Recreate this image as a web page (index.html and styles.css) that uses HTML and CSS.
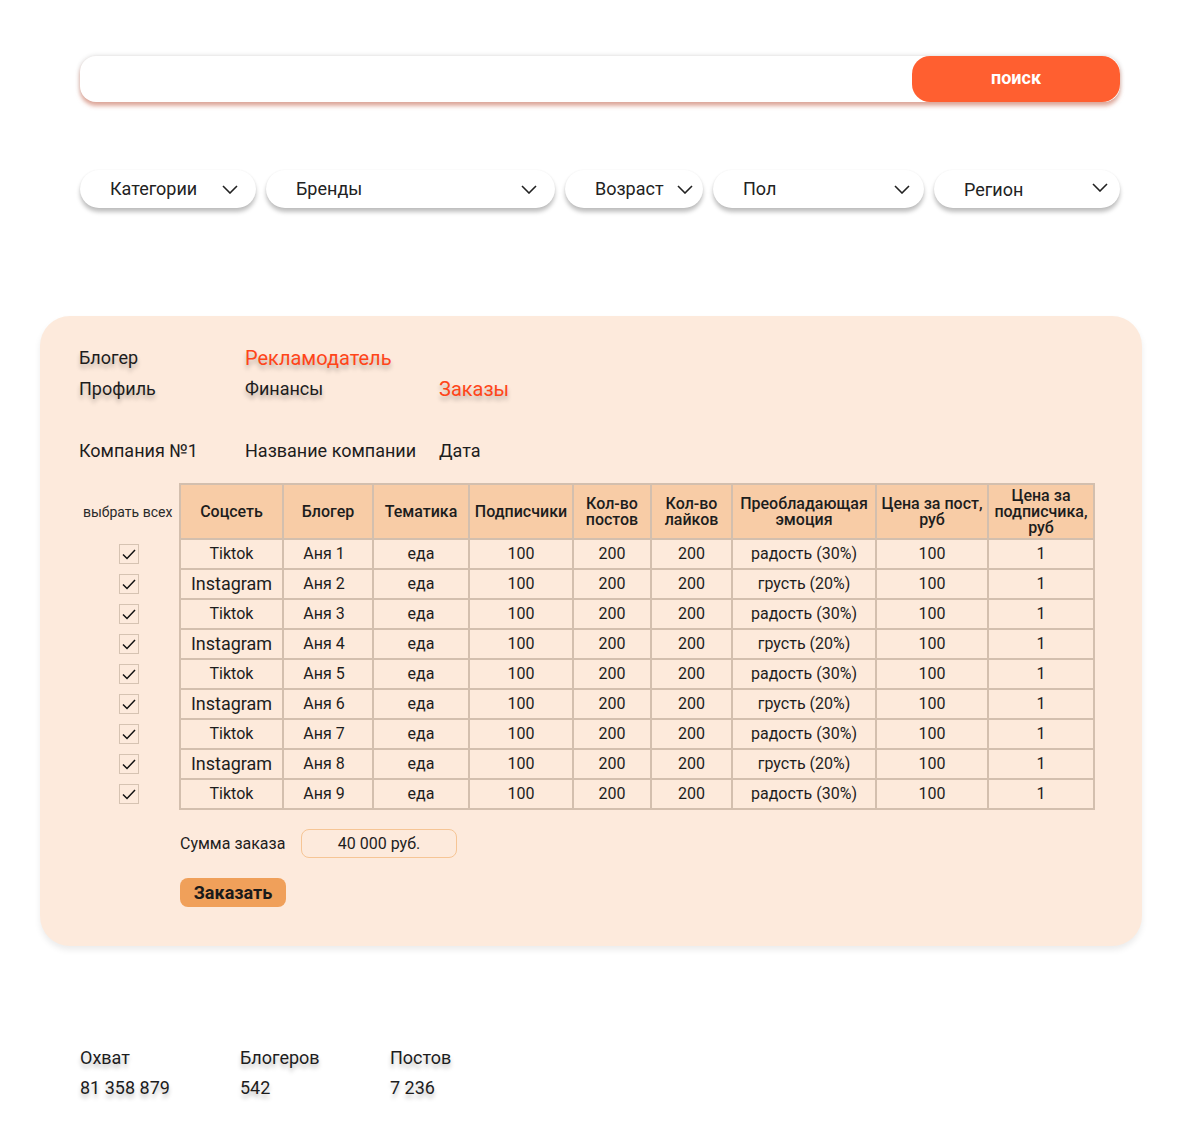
FILE: index.html
```html
<!DOCTYPE html>
<html lang="ru">
<head>
<meta charset="utf-8">
<title>Заказы</title>
<link rel="stylesheet" href="styles.css">
</head>
<body>
<div class="top">
  <div class="search">
    <div class="search-input"></div>
    <button class="search-btn">поиск</button>
  </div>
  <div class="filters">
    <div class="pill w1"><span>Категории</span><svg class="chev" viewBox="0 0 16 9"><path d="M1 1l7 7 7-7"/></svg></div>
    <div class="pill w2"><span>Бренды</span><svg class="chev" viewBox="0 0 16 9"><path d="M1 1l7 7 7-7"/></svg></div>
    <div class="pill w3"><span>Возраст</span><svg class="chev" viewBox="0 0 16 9"><path d="M1 1l7 7 7-7"/></svg></div>
    <div class="pill w4"><span>Пол</span><svg class="chev" viewBox="0 0 16 9"><path d="M1 1l7 7 7-7"/></svg></div>
    <div class="pill w5"><span class="down">Регион</span><svg class="chev up" viewBox="0 0 16 9"><path d="M1 1l7 7 7-7"/></svg></div>
  </div>
</div>

<div class="panel">
  <div class="nav">
    <span class="sh">Блогер</span><span class="sh accent">Рекламодатель</span><span></span>
    <span class="sh">Профиль</span><span class="sh">Финансы</span><span class="sh accent">Заказы</span>
  </div>
  <div class="nav company">
    <span>Компания №1</span><span>Название компании</span><span>Дата</span>
  </div>

  <table class="orders">
    <colgroup>
      <col style="width:101px"><col style="width:103px"><col style="width:90px"><col style="width:96px"><col style="width:104px"><col style="width:78px"><col style="width:81px"><col style="width:144px"><col style="width:112px"><col style="width:106px">
    </colgroup>
    <thead>
      <tr>
        <th class="sel all">выбрать всех</th>
        <th>Соцсеть</th><th>Блогер</th><th>Тематика</th><th>Подписчики</th><th>Кол-во постов</th><th>Кол-во лайков</th><th>Преобладающая эмоция</th><th>Цена за пост, руб</th><th>Цена за подписчика, руб</th>
      </tr>
    </thead>
    <tbody>
      <tr><td class="sel"><span class="cb"><svg viewBox="0 0 14 11"><path d="M1 5.5l4 4L13 1"/></svg></span></td><td>Tiktok</td><td class="name">Аня 1</td><td>еда</td><td>100</td><td>200</td><td>200</td><td>радость (30%)</td><td>100</td><td>1</td></tr>
      <tr><td class="sel"><span class="cb"><svg viewBox="0 0 14 11"><path d="M1 5.5l4 4L13 1"/></svg></span></td><td class="big">Instagram</td><td class="name">Аня 2</td><td>еда</td><td>100</td><td>200</td><td>200</td><td>грусть (20%)</td><td>100</td><td>1</td></tr>
      <tr><td class="sel"><span class="cb"><svg viewBox="0 0 14 11"><path d="M1 5.5l4 4L13 1"/></svg></span></td><td>Tiktok</td><td class="name">Аня 3</td><td>еда</td><td>100</td><td>200</td><td>200</td><td>радость (30%)</td><td>100</td><td>1</td></tr>
      <tr><td class="sel"><span class="cb"><svg viewBox="0 0 14 11"><path d="M1 5.5l4 4L13 1"/></svg></span></td><td class="big">Instagram</td><td class="name">Аня 4</td><td>еда</td><td>100</td><td>200</td><td>200</td><td>грусть (20%)</td><td>100</td><td>1</td></tr>
      <tr><td class="sel"><span class="cb"><svg viewBox="0 0 14 11"><path d="M1 5.5l4 4L13 1"/></svg></span></td><td>Tiktok</td><td class="name">Аня 5</td><td>еда</td><td>100</td><td>200</td><td>200</td><td>радость (30%)</td><td>100</td><td>1</td></tr>
      <tr><td class="sel"><span class="cb"><svg viewBox="0 0 14 11"><path d="M1 5.5l4 4L13 1"/></svg></span></td><td class="big">Instagram</td><td class="name">Аня 6</td><td>еда</td><td>100</td><td>200</td><td>200</td><td>грусть (20%)</td><td>100</td><td>1</td></tr>
      <tr><td class="sel"><span class="cb"><svg viewBox="0 0 14 11"><path d="M1 5.5l4 4L13 1"/></svg></span></td><td>Tiktok</td><td class="name">Аня 7</td><td>еда</td><td>100</td><td>200</td><td>200</td><td>радость (30%)</td><td>100</td><td>1</td></tr>
      <tr><td class="sel"><span class="cb"><svg viewBox="0 0 14 11"><path d="M1 5.5l4 4L13 1"/></svg></span></td><td class="big">Instagram</td><td class="name">Аня 8</td><td>еда</td><td>100</td><td>200</td><td>200</td><td>грусть (20%)</td><td>100</td><td>1</td></tr>
      <tr><td class="sel"><span class="cb"><svg viewBox="0 0 14 11"><path d="M1 5.5l4 4L13 1"/></svg></span></td><td>Tiktok</td><td class="name">Аня 9</td><td>еда</td><td>100</td><td>200</td><td>200</td><td>радость (30%)</td><td>100</td><td>1</td></tr>
    </tbody>
  </table>

  <div class="sum">
    <span class="sum-label">Сумма заказа</span>
    <div class="sum-box">40 000 руб.</div>
  </div>
  <button class="order-btn">Заказать</button>
</div>

<div class="stats">
  <div class="stat"><div class="sh">Охват</div><div class="sh">81 358 879</div></div>
  <div class="stat s2"><div class="sh">Блогеров</div><div class="sh">542</div></div>
  <div class="stat"><div class="sh">Постов</div><div class="sh">7 236</div></div>
</div>
</body>
</html>
```

FILE: styles.css
```css
* { box-sizing: border-box; }
body {
  margin: 0;
  background: #fff;
  font-family: Roboto, "Noto Sans", Arial, sans-serif;
  color: #1d1d1d;
}
.top { padding: 56px 80px 0 80px; }
.search {
  display: flex;
  height: 46px;
  border-radius: 16px;
  background: #fff;
  box-shadow: 0 4px 4px rgba(205, 110, 85, 0.55), 0 0 5px rgba(0, 0, 0, 0.16);
}
.search-input { flex: 1; }
.search-btn {
  width: 208px;
  border: none;
  border-radius: 18px;
  background: #ff5f30;
  color: #fff;
  font-family: Roboto, sans-serif;
  font-weight: 700;
  font-size: 18px;
  padding: 0 0 4px 0;
}
.filters {
  display: flex;
  gap: 10px;
  margin-top: 68px;
}
.pill {
  height: 38px;
  border-radius: 19px;
  background: #fff;
  box-shadow: 0 4px 4px rgba(0, 0, 0, 0.25), 0 0 2px rgba(0, 0, 0, 0.06);
  display: flex;
  align-items: center;
  justify-content: space-between;
  padding: 0 18px 0 30px;
  font-size: 18px;
  color: #222;
}
.pill span { position: relative; top: -1px; }
.pill span.down { top: 0; }
.w1 { width: 176px; }
.w2 { width: 289px; }
.w3 { width: 138px; padding-right: 10px; }
.w4 { width: 211px; padding-right: 14px; }
.w5 { width: 186px; padding-right: 12px; }
.chev {
  width: 16px;
  height: 9px;
  fill: none;
  stroke: #222;
  stroke-width: 1.6;
}
.chev.up { position: relative; top: -2px; }

.panel {
  margin: 108px 58px 0 40px;
  height: 630px;
  background: #fdeadc;
  border-radius: 30px;
  box-shadow: 0 4px 6px rgba(0, 0, 0, 0.08);
  padding: 26px 0 0 39px;
}
.nav {
  display: grid;
  grid-template-columns: 166px 194px auto;
  grid-auto-rows: 31px;
  align-items: center;
  font-size: 18px;
  color: #1d1d1d;
}
.sh { text-shadow: 0 4px 4px rgba(0, 0, 0, 0.25); }
.accent { color: #ff4519; font-size: 20px; }
.company { margin-top: 31px; }

.orders {
  margin-top: 17px;
  border-collapse: collapse;
  table-layout: fixed;
  width: 1015px;
  font-size: 16px;
}
.orders th, .orders td {
  border: 2px solid #d3bfae;
  text-align: center;
  padding: 0 2px;
  color: #1d1d1d;
}
.orders th {
  height: 55px;
  background: #f8cca6;
  font-size: 16px;
  font-weight: 500;
  line-height: 16px;
}
.orders td {
  height: 30px;
  background: #fdeadb;
  line-height: 18px;
}
.orders td.big { font-size: 18px; }
.orders td.name { padding: 0 10px 0 2px; }
.orders .sel {
  border: none;
  background: transparent;
  padding: 0;
}
.orders th.sel.all {
  font-size: 14px;
  font-weight: 400;
  color: #2a2a2a;
  text-align: left;
  padding-left: 4px;
}
.cb {
  display: inline-flex;
  align-items: center;
  justify-content: center;
  width: 20px;
  height: 20px;
  border: 1px solid #d6c3b2;
  margin-left: 40px;
  vertical-align: middle;
}
.cb svg {
  width: 14px;
  height: 11px;
  fill: none;
  stroke: #111;
  stroke-width: 1.5;
}
.orders td.sel { text-align: left; }

.sum {
  display: flex;
  align-items: center;
  margin: 19px 0 0 101px;
}
.sum-label { font-size: 16px; width: 121px; }
.sum-box {
  width: 156px;
  height: 29px;
  border: 1px solid #f6c595;
  border-radius: 8px;
  display: flex;
  align-items: center;
  justify-content: center;
  font-size: 16px;
}
.order-btn {
  display: block;
  margin: 20px 0 0 101px;
  width: 106px;
  height: 29px;
  border: none;
  border-radius: 8px;
  background: #f0a05a;
  font-family: Roboto, sans-serif;
  font-weight: 700;
  font-size: 18px;
  color: #1a1a1a;
  padding: 0;
}

.stats {
  display: flex;
  margin: 97px 0 0 80px;
  font-size: 18px;
  line-height: 30px;
}
.stat { width: 160px; }
.stat.s2 { width: 150px; }
```
